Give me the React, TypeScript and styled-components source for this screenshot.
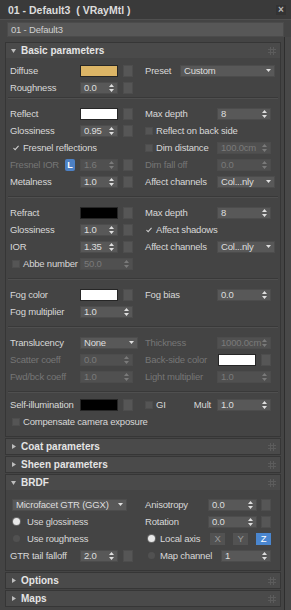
import React from 'react';
import styled, { createGlobalStyle } from 'styled-components';

const GlobalStyle = createGlobalStyle`
  html, body {
    margin: 0;
    padding: 0;
    background: #444444;
  }
  body {
    font-family: "Liberation Sans", Arial, sans-serif;
    font-size: 9.5px;
    letter-spacing: -0.2px;
    color: #d8d8d8;
  }
`;

const Frame = styled.div`
  width: 291px;
  height: 610px;
  overflow: hidden;
  background: #444444;
  display: flex;
  flex-direction: column;
`;

const TitleBar = styled.div`
  height: 19px;
  flex: none;
  display: flex;
  align-items: center;
  justify-content: space-between;
  padding: 0 5px 0 8px;
  background: #3a3a3a;
  border-bottom: 1px solid #4f4f4f;
  font-size: 10.5px;
  font-weight: bold;
  letter-spacing: 0;
  color: #dcdcdc;
  white-space: pre;
`;

const Close = styled.span`
  width: 10px;
  height: 10px;
  display: flex;
  align-items: center;
  justify-content: center;
  background: #333333;
  color: #b8b8b8;
  font-size: 10px;
  line-height: 1;
`;

const NameField = styled.div`
  height: 15px;
  margin: 2px 7px 0 7px;
  flex: none;
  box-sizing: border-box;
  display: flex;
  align-items: center;
  padding-left: 3px;
  background: #575757;
  border: 1px solid #4b4b4b;
  color: #d0d0d0;
`;

const Main = styled.div`
  flex: 1;
  display: flex;
  min-height: 0;
`;

const Rollouts = styled.div`
  width: 276px;
  margin-left: 5px;
  padding-top: 5px;
  display: flex;
  flex-direction: column;
  gap: 1px;
`;

const ScrollTrack = styled.div`
  flex: 1;
  margin-left: 3px;
  border-left: 1px solid #2e2e2e;
  background: #484848;
`;

const Rollout = styled.section`
  border: 1px solid #363636;
  background: #444444;
`;

const HeaderBar = styled.div`
  height: 15px;
  display: flex;
  align-items: center;
  gap: 5px;
  padding: 0 4px 0 5px;
  background: #4a4a4a;
  font-size: 10px;
  font-weight: bold;
  letter-spacing: 0;
  color: #e4e4e4;
`;

const TriBox = styled.span`
  width: 5px;
  display: flex;
  justify-content: center;
`;

const HeaderTitle = styled.span`
  flex: 1;
`;

const Body = styled.div`
  padding: 0 9px 0 4px;
`;

const Section = styled.div<{ $pad: string }>`
  padding: ${p => p.$pad};
`;

const Separator = styled.div`
  height: 0;
  margin: 0 -7px 0 -2px;
  border-top: 1px solid #393939;
  border-bottom: 1px solid #4f4f4f;
`;

const Row = styled.div`
  height: 17px;
  display: grid;
  grid-template-columns: 70px 65px 1fr;
  align-items: center;
`;

const Label = styled.span<{ $off?: boolean }>`
  color: ${p => (p.$off ? '#767676' : '#d8d8d8')};
  white-space: nowrap;
`;

const LabelCell = styled.div`
  display: flex;
  align-items: center;
  justify-content: space-between;
  padding-right: 5px;
`;

const Wide = styled.div<{ $indent?: number }>`
  grid-column: span 2;
  display: flex;
  align-items: center;
  gap: 4px;
  padding-left: ${p => p.$indent ?? 2}px;
`;

const Value = styled.div`
  display: flex;
  align-items: center;
  gap: 5px;
`;

const Right = styled.div`
  display: flex;
  align-items: center;
  justify-content: space-between;
`;

const Group = styled.div<{ $gap?: number; $pad?: number }>`
  display: flex;
  align-items: center;
  gap: ${p => p.$gap ?? 4}px;
  padding-left: ${p => p.$pad ?? 0}px;
`;

const Swatch = styled.div<{ $color: string; $w?: number }>`
  width: ${p => p.$w ?? 38}px;
  height: 12px;
  box-sizing: border-box;
  background: ${p => p.$color};
  border: 1px solid #262626;
`;

const MapBtn = styled.div`
  width: 10px;
  height: 12px;
  box-sizing: border-box;
  background: #565656;
  border: 1px solid #4d4d4d;
`;

const FieldBox = styled.div<{ $w: number; $off?: boolean; $bleed?: number }>`
  width: ${p => p.$w}px;
  height: 12px;
  box-sizing: border-box;
  display: flex;
  align-items: center;
  justify-content: space-between;
  padding: 0 3px 0 3px;
  margin-right: ${p => -(p.$bleed ?? 0)}px;
  background: ${p => (p.$off ? '#505050' : '#585858')};
  border: 1px solid #4c4c4c;
  color: ${p => (p.$off ? '#7a7a7a' : '#dedede')};
  white-space: nowrap;
`;

const Check = styled.span<{ $on?: boolean }>`
  width: 8px;
  height: 8px;
  flex: none;
  box-sizing: border-box;
  display: inline-flex;
  align-items: center;
  justify-content: center;
  background: ${p => (p.$on ? 'transparent' : '#555555')};
  border: 1px solid ${p => (p.$on ? 'transparent' : '#4d4d4d')};
`;

const Radio = styled.span<{ $on?: boolean }>`
  width: 7px;
  height: 7px;
  flex: none;
  border-radius: 50%;
  background: ${p => (p.$on ? '#e8e8e8' : '#515151')};
  box-shadow: ${p => (p.$on ? '0 0 0 1px #6a6a6a' : 'none')};
`;

const LBadge = styled.span`
  width: 10px;
  height: 12px;
  display: flex;
  align-items: center;
  justify-content: center;
  border-radius: 2px;
  background: #4c80c4;
  color: #ffffff;
  font-weight: bold;
  font-size: 9px;
`;

const AxisBtn = styled.span<{ $on?: boolean }>`
  width: 15px;
  height: 12px;
  display: flex;
  align-items: center;
  justify-content: center;
  background: ${p => (p.$on ? '#4a86cf' : '#525252')};
  color: ${p => (p.$on ? '#ffffff' : '#9a9a9a')};
`;

const Tri = ({ open }: { open: boolean }) =>
  open ? (
    <svg width="5" height="4" viewBox="0 0 5 4"><path d="M0 0h5L2.5 4z" fill="#bdbdbd" /></svg>
  ) : (
    <svg width="4" height="5" viewBox="0 0 4 5"><path d="M0 0l4 2.5L0 5z" fill="#bdbdbd" /></svg>
  );

const Grip = () => (
  <svg width="8" height="8" viewBox="0 0 8 8">
    <path d="M2.5 0v8M5.5 0v8M0 2.5h8M0 5.5h8" stroke="#5c5c5c" strokeWidth="1" />
  </svg>
);

const Header = ({ title, open }: { title: string; open: boolean }) => (
  <HeaderBar>
    <TriBox><Tri open={open} /></TriBox>
    <HeaderTitle>{title}</HeaderTitle>
    <Grip />
  </HeaderBar>
);

const Arrows = () => (
  <svg width="5" height="8" viewBox="0 0 5 8">
    <path d="M2.5 0L5 3H0zM2.5 8L0 5h5z" fill="currentColor" />
  </svg>
);

const DownArrow = () => (
  <svg width="5" height="3" viewBox="0 0 5 3"><path d="M0 0h5L2.5 3z" fill="#e0e0e0" /></svg>
);

const Spin = ({ w = 38, off, children }: { w?: number; off?: boolean; children: React.ReactNode }) => (
  <FieldBox $w={w} $off={off}>
    <span>{children}</span>
    <Arrows />
  </FieldBox>
);

const Drop = ({ w, bleed, children }: { w: number; bleed?: number; children: React.ReactNode }) => (
  <FieldBox $w={w} $bleed={bleed}>
    <span>{children}</span>
    <DownArrow />
  </FieldBox>
);

const Tick = () => (
  <svg width="7" height="6" viewBox="0 0 7 6">
    <path d="M0.5 3l2 2L6.5 0.5" stroke="#d0d0d0" strokeWidth="1.2" fill="none" />
  </svg>
);

const CheckItem = ({ on, off, children }: { on?: boolean; off?: boolean; children: React.ReactNode }) => (
  <Group $gap={3}>
    <Check $on={on}>{on && <Tick />}</Check>
    <Label $off={off}>{children}</Label>
  </Group>
);

export default function App() {
  return (
    <>
      <GlobalStyle />
      <Frame>
        <TitleBar>
          <span>01 - Default3  ( VRayMtl )</span>
          <Close>×</Close>
        </TitleBar>
        <NameField>01 - Default3</NameField>
        <Main>
          <Rollouts>
            <Rollout>
              <Header title="Basic parameters" open />
              <Body>
                <Section $pad="4px 0 1px">
                  <Row>
                    <Label>Diffuse</Label>
                    <Value><Swatch $color="#dcb566" /><MapBtn /></Value>
                    <Right><Label>Preset</Label><Drop w={95} bleed={4}>Custom</Drop></Right>
                  </Row>
                  <Row>
                    <Label>Roughness</Label>
                    <Value><Spin>0.0</Spin><MapBtn /></Value>
                  </Row>
                </Section>
                <Separator />
                <Section $pad="6px 0">
                  <Row>
                    <Label>Reflect</Label>
                    <Value><Swatch $color="#ffffff" /><MapBtn /></Value>
                    <Right><Label>Max depth</Label><Spin w={54}>8</Spin></Right>
                  </Row>
                  <Row>
                    <Label>Glossiness</Label>
                    <Value><Spin>0.95</Spin><MapBtn /></Value>
                    <Right><CheckItem>Reflect on back side</CheckItem></Right>
                  </Row>
                  <Row>
                    <Wide><CheckItem on>Fresnel reflections</CheckItem></Wide>
                    <Right><CheckItem>Dim distance</CheckItem><Spin w={54} off>100.0cm</Spin></Right>
                  </Row>
                  <Row>
                    <LabelCell><Label $off>Fresnel IOR</Label><LBadge>L</LBadge></LabelCell>
                    <Value><Spin off>1.6</Spin><MapBtn /></Value>
                    <Right><Label $off>Dim fall off</Label><Spin w={54} off>0.0</Spin></Right>
                  </Row>
                  <Row>
                    <Label>Metalness</Label>
                    <Value><Spin>1.0</Spin><MapBtn /></Value>
                    <Right><Label>Affect channels</Label><Drop w={58} bleed={4}>Col...nly</Drop></Right>
                  </Row>
                </Section>
                <Separator />
                <Section $pad="6px 0">
                  <Row>
                    <Label>Refract</Label>
                    <Value><Swatch $color="#000000" /><MapBtn /></Value>
                    <Right><Label>Max depth</Label><Spin w={54}>8</Spin></Right>
                  </Row>
                  <Row>
                    <Label>Glossiness</Label>
                    <Value><Spin>1.0</Spin><MapBtn /></Value>
                    <Right><CheckItem on>Affect shadows</CheckItem></Right>
                  </Row>
                  <Row>
                    <Label>IOR</Label>
                    <Value><Spin>1.35</Spin><MapBtn /></Value>
                    <Right><Label>Affect channels</Label><Drop w={58} bleed={4}>Col...nly</Drop></Right>
                  </Row>
                  <Row>
                    <Group $gap={3} $pad={2}><Check /><Label>Abbe number</Label></Group>
                    <Value><Spin w={53} off>50.0</Spin></Value>
                  </Row>
                </Section>
                <Separator />
                <Section $pad="6px 0">
                  <Row>
                    <Label>Fog color</Label>
                    <Value><Swatch $color="#ffffff" /><MapBtn /></Value>
                    <Right><Label>Fog bias</Label><Spin w={54}>0.0</Spin></Right>
                  </Row>
                  <Row>
                    <Label>Fog multiplier</Label>
                    <Value><Spin w={53}>1.0</Spin></Value>
                  </Row>
                </Section>
                <Separator />
                <Section $pad="6px 0">
                  <Row>
                    <Label>Translucency</Label>
                    <Value><Drop w={58}>None</Drop></Value>
                    <Right><Label $off>Thickness</Label><Spin w={54} off>1000.0cm</Spin></Right>
                  </Row>
                  <Row>
                    <Label $off>Scatter coeff</Label>
                    <Value><Spin w={53} off>0.0</Spin></Value>
                    <Right>
                      <Label $off>Back-side color</Label>
                      <Group $gap={5}><Swatch $color="#ffffff" /><MapBtn /></Group>
                    </Right>
                  </Row>
                  <Row>
                    <Label $off>Fwd/bck coeff</Label>
                    <Value><Spin w={53} off>1.0</Spin></Value>
                    <Right><Label $off>Light multiplier</Label><Spin w={54} off>1.0</Spin></Right>
                  </Row>
                </Section>
                <Separator />
                <Section $pad="3px 0 6px">
                  <Row>
                    <Label>Self-illumination</Label>
                    <Value><Swatch $color="#000000" /><MapBtn /></Value>
                    <Right>
                      <CheckItem>GI</CheckItem>
                      <Group $gap={6}><Label>Mult</Label><Spin w={54}>1.0</Spin></Group>
                    </Right>
                  </Row>
                  <Row>
                    <Wide><CheckItem>Compensate camera exposure</CheckItem></Wide>
                  </Row>
                </Section>
              </Body>
            </Rollout>
            <Rollout>
              <Header title="Coat parameters" open={false} />
            </Rollout>
            <Rollout>
              <Header title="Sheen parameters" open={false} />
            </Rollout>
            <Rollout>
              <Header title="BRDF" open />
              <Body>
                <Section $pad="6px 0">
                  <Row>
                    <Wide><Drop w={115}>Microfacet GTR (GGX)</Drop></Wide>
                    <Right>
                      <Label>Anisotropy</Label>
                      <Group><Spin w={49}>0.0</Spin><MapBtn /></Group>
                    </Right>
                  </Row>
                  <Row>
                    <Wide $indent={3}><Group $gap={7}><Radio $on /><Label>Use glossiness</Label></Group></Wide>
                    <Right>
                      <Label>Rotation</Label>
                      <Group><Spin w={49}>0.0</Spin><MapBtn /></Group>
                    </Right>
                  </Row>
                  <Row>
                    <Wide $indent={3}><Group $gap={7}><Radio /><Label>Use roughness</Label></Group></Wide>
                    <Right>
                      <Group $gap={5} $pad={3}><Radio $on /><Label>Local axis</Label></Group>
                      <Group $gap={8}>
                        <AxisBtn>X</AxisBtn>
                        <AxisBtn>Y</AxisBtn>
                        <AxisBtn $on>Z</AxisBtn>
                      </Group>
                    </Right>
                  </Row>
                  <Row>
                    <Label>GTR tail falloff</Label>
                    <Value><Spin>2.0</Spin><MapBtn /></Value>
                    <Right>
                      <Group $gap={5} $pad={3}><Radio /><Label>Map channel</Label></Group>
                      <Spin w={50}>1</Spin>
                    </Right>
                  </Row>
                </Section>
              </Body>
            </Rollout>
            <Rollout>
              <Header title="Options" open={false} />
            </Rollout>
            <Rollout>
              <Header title="Maps" open={false} />
            </Rollout>
          </Rollouts>
          <ScrollTrack />
        </Main>
      </Frame>
    </>
  );
}
